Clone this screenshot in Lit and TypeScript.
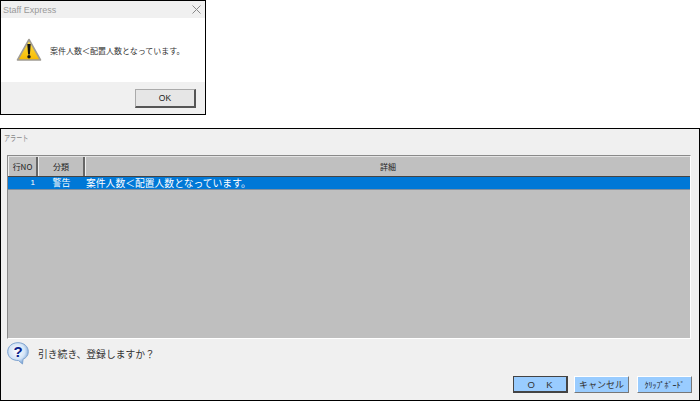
import { LitElement, html, css } from "lit";
import { customElement } from "lit/decorators.js";

const warnIcon = html`<svg class="icon" width="26" height="24" viewBox="0 0 26 24">
  <defs><linearGradient id="w" x1="0" y1="0" x2="0" y2="1"><stop offset="0" stop-color="#ffe24d"/><stop offset="1" stop-color="#f7b900"/></linearGradient></defs>
  <path d="M13 1.500 L24.500 22 H1.500 Z" fill="url(#w)" stroke="#a09c94" stroke-width="1.600" stroke-linejoin="round"/>
  <path d="M11.300 6 h3.400 l-.8 10.500 h-1.800 Z" fill="#111"/><circle cx="13" cy="18.800" r="1.700" fill="#111"/>
</svg>`;

const helpIcon = html`<svg class="icon" width="22" height="23" viewBox="0 0 22 23">
  <defs><radialGradient id="q" cx=".45" cy=".4" r=".7"><stop offset="0" stop-color="#ffffff"/><stop offset=".55" stop-color="#d3e4f7"/><stop offset="1" stop-color="#4f86c8"/></radialGradient></defs>
  <path d="M11 .7 C17 .7 21.300 4.500 21.300 9.700 C21.300 13.500 19 16 16 17.200 L15.500 22 L11.500 18.500 C5 18.500 .7 15 .7 9.700 C.7 4.500 5 .7 11 .7 Z" fill="url(#q)" stroke="#7fa3cf" stroke-width="1"/>
  <text x="11" y="15" text-anchor="middle" class="q">?</text>
</svg>`;

@customElement("app-root")
export class AppRoot extends LitElement {
  static styles = css`
    :host { display: block; width: 700px; height: 401px; background: #fff; overflow: hidden;
      font-family: "Noto Sans CJK JP", "Liberation Sans", sans-serif; color: #222; }
    .page { display: flex; flex-direction: column; gap: 13px; }
    .msg { width: 206px; height: 115px; box-sizing: border-box; border: 1px solid #000; display: flex; flex-direction: column; background: #f0f0f0; }
    .msg-title { height: 17px; display: flex; align-items: center; justify-content: space-between; padding: 0 4px 0 2px; font: 9px "Liberation Sans", sans-serif; color: #999; }
    .msg-body { flex: 1; background: #fff; display: flex; align-items: center; gap: 8px; padding: 0 0 0 15px; font-size: 8px; color: #333; }
    .msg-foot { height: 32px; display: flex; align-items: center; justify-content: flex-end; padding: 0 9px 0 0; }
    .msg-ok { width: 61px; height: 19px; box-sizing: border-box; background: #e6e6e6; border: 1px solid #aaa; border-right: 2px solid #555; border-bottom: 2px solid #555; display: flex; align-items: center; justify-content: center; font: 8.500px "Liberation Sans", sans-serif; color: #222; }
    .alert { height: 273px; box-sizing: border-box; border: 1px solid #000; background: #f0f0f0; display: flex; flex-direction: column; }
    .alert-title { height: 26px; padding: 2px 0 0 3px; font-size: 8.500px; color: #888; box-sizing: border-box; }
    .alert-title span { display: inline-block; transform: scaleX(.72); transform-origin: left center; }
    .grid { margin: 0 8px 0 6px; height: 184px; box-sizing: border-box; background: #bfbfbf; border: 1px solid #8a8a8a; border-right-color: #fff; border-bottom-color: #fff; display: flex; flex-direction: column; }
    .row { display: grid; grid-template-columns: 30px 47px 1fr; }
    .head { height: 21px; background: #c0c0c0; border-top: 1px solid #e4e4e4; box-sizing: border-box; font-size: 8px; color: #222; border-bottom: 1px solid #444; }
    .head span { display: flex; align-items: center; justify-content: center; border-right: 2px solid #666; border-left: 1px solid #eee; }
    .head span:last-child { border-right: none; }
    .sel { height: 12px; background: #0078d7; color: #fff; font-size: 9.800px; line-height: 12px; border-bottom: 1px solid #7f8fa0; box-sizing: content-box; }
    .sel span { white-space: nowrap; overflow: hidden; }
    .sel .n { text-align: right; padding-right: 3px; font: 8px/12px "Liberation Sans", sans-serif; }
    .sel .c { text-align: center; font-size: 9px; }
    .sel .d { padding-left: 1px; }
    .ask { height: 29px; display: flex; align-items: center; gap: 9px; padding: 0 0 0 6px; font-size: 9.800px; color: #333; }
    .actions { display: flex; justify-content: flex-end; padding: 8px 7px 0 0; }
    .btn { width: 55px; height: 17px; box-sizing: border-box; background: #99ccff; border-top: 1px solid #fff; border-left: 1px solid #fff; border-right: 1px solid #777; border-bottom: 1px solid #777; display: flex; align-items: center; justify-content: center; font: 9px "Noto Sans CJK JP", sans-serif; color: #333; white-space: pre; margin-left: 8px; }
    .btn.def { border: 1px solid #444; border-right-width: 2px; border-bottom-width: 2px; margin-right: -2px; font: 9.500px "Liberation Sans", sans-serif; word-spacing: 3px; }
    .btn.small { font-size: 8px; color: #111; }
    .q { font: bold 15px "Liberation Sans", sans-serif; fill: #08208a; }
    .icon { flex: none; display: block; }
  `;

  render() {
    return html`<div class="page">
      <section class="msg">
        <div class="msg-title"><span>Staff Express</span>
          <svg width="9" height="9" viewBox="0 0 9 9"><path d="M.5 .5 L8.500 8.500 M8.500 .5 L.5 8.500" stroke="#888" stroke-width="1" fill="none"/></svg>
        </div>
        <div class="msg-body">${warnIcon}<span>案件人数＜配置人数となっています。</span></div>
        <div class="msg-foot"><div class="msg-ok">OK</div></div>
      </section>
      <section class="alert">
        <div class="alert-title"><span>アラート</span></div>
        <div class="grid">
          <div class="row head"><span>行NO</span><span>分類</span><span>詳細</span></div>
          <div class="row sel"><span class="n">1</span><span class="c">警告</span><span class="d">案件人数＜配置人数となっています。</span></div>
        </div>
        <div class="ask">${helpIcon}<span>引き続き、登録しますか？</span></div>
        <div class="actions">
          <div class="btn def">O  K</div>
          <div class="btn">キャンセル</div>
          <div class="btn small">ｸﾘｯﾌﾟﾎﾞｰﾄﾞ</div>
        </div>
      </section>
    </div>`;
  }
}
